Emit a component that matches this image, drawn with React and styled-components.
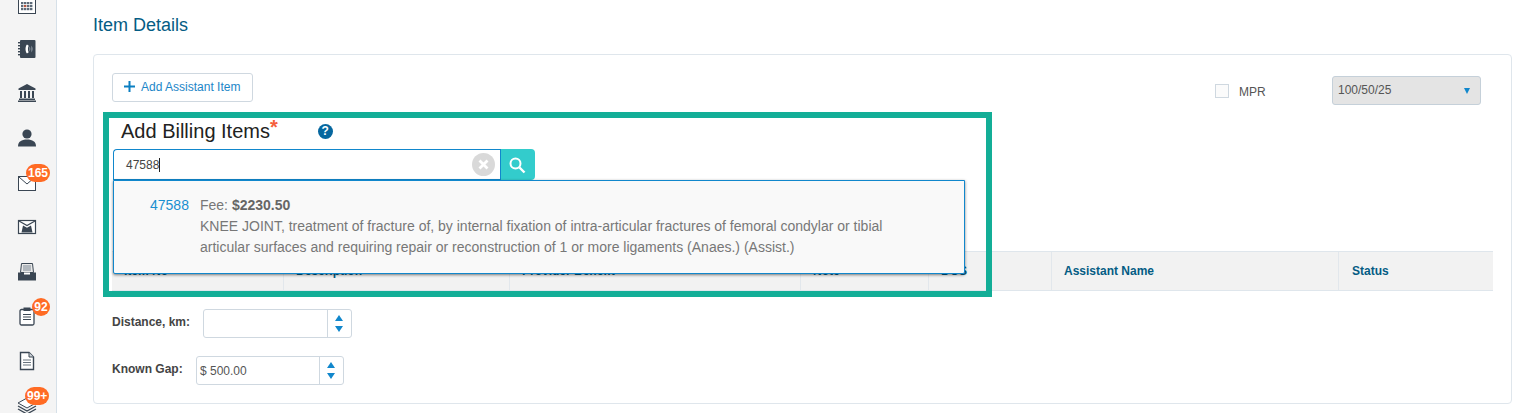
import React from 'react'
import styled, { createGlobalStyle } from 'styled-components'

const Global = createGlobalStyle`
html, body { margin: 0; padding: 0; height: 413px; overflow: hidden; background: #fff; }
body { font-family: "Liberation Sans", Arial, sans-serif; color: #444; }
* { box-sizing: border-box; }
`

const Page = styled.div`
display: flex;
height: 413px;
overflow: hidden;
`

const Sidebar = styled.aside`
width: 57px;
flex: none;
background: #f4f4f4;
border-right: 1px solid #d6e0e8;
overflow: hidden;
`

const NavList = styled.div`
display: flex;
flex-direction: column;
align-items: center;
margin-top: -18px;
`

const NavItem = styled.div`
position: relative;
width: 56px;
height: 44.6px;
display: flex;
align-items: center;
justify-content: center;
padding-right: 2px;
`

const Badge = styled.span`
position: absolute;
top: 4px;
left: ${p => p.$left}px;
min-width: 18px;
height: 18px;
padding: 0 ${p => p.$pad || 0}px;
border-radius: 9px;
background: #ff6b24;
color: #fff;
font-size: 12px;
font-weight: bold;
line-height: 18px;
text-align: center;
`

const Main = styled.main`
flex: 1;
min-width: 0;
padding: 15px 22px 0 36px;
`

const Heading = styled.h2`
margin: 0 0 18px;
height: 21px;
font-size: 18px;
font-weight: normal;
line-height: 21px;
color: #045c84;
`

const Card = styled.section`
position: relative;
height: 350px;
border: 1px solid #dfe6ec;
border-radius: 4px;
padding: 18px 18px 0;
`

const TopRow = styled.div`
display: flex;
align-items: flex-start;
height: 39px;
`

const AddButton = styled.button`
display: flex;
align-items: center;
gap: 6px;
width: 141px;
height: 29px;
padding: 0 0 2px 11px;
background: #fff;
border: 1px solid #cfd8e0;
border-radius: 3px;
color: #1c86c8;
font: 12px "Liberation Sans", Arial, sans-serif;
`

const MprGroup = styled.div`
display: flex;
align-items: center;
height: 29px;
margin: 3px 12px 0 auto;
`

const CheckBox = styled.span`
width: 14px;
height: 14px;
margin-right: 10px;
background: #fbfbfb;
border: 1px solid #cfd8e0;
`

const MprLabel = styled.span`
width: 93px;
padding-top: 2px;
font-size: 12px;
color: #555;
`

const Select = styled.div`
display: flex;
align-items: center;
justify-content: space-between;
width: 149px;
height: 29px;
padding: 0 10px 1px 5px;
background: #e4e4e4;
border: 1px solid #c5d0d9;
border-radius: 3px;
font-size: 12px;
color: #555;
`

const SelectArrow = styled.span`
width: 0;
height: 0;
margin-top: 1px;
border-left: 3.5px solid transparent;
border-right: 3.5px solid transparent;
border-top: 6px solid #1187cc;
`

const BillingBlock = styled.div`
position: relative;
height: 139px;
`

const BillingTitle = styled.div`
display: flex;
align-items: center;
height: 33px;
padding: 5px 0 0 9px;
font-size: 20px;
line-height: 28px;
color: #222;
`

const Required = styled.span`
position: relative;
top: -4px;
color: #f5603c;
font-size: 20px;
font-weight: bold;
line-height: 0;
`

const HelpIcon = styled.span`
display: inline-flex;
align-items: center;
justify-content: center;
width: 15px;
height: 15px;
margin-left: 40px;
border-radius: 50%;
background: #06679f;
color: #fff;
font-size: 12px;
font-weight: bold;
`

const SearchRow = styled.div`
display: flex;
width: 422px;
height: 31px;
margin: 4px 0 0 1px;
`

const SearchField = styled.div`
flex: 1;
display: flex;
align-items: center;
padding: 0 5px 0 12px;
border: 1px solid #1187cc;
border-right: none;
border-radius: 4px 0 0 0;
font-size: 12px;
color: #444;
`

const Caret = styled.span`
width: 1px;
height: 14px;
background: #222;
`

const ClearButton = styled.span`
display: flex;
align-items: center;
justify-content: center;
width: 23px;
height: 23px;
margin-left: auto;
border-radius: 50%;
background: #d9d9d9;
`

const SearchButton = styled.span`
display: flex;
align-items: center;
justify-content: center;
width: 35px;
padding-right: 2px;
background: #33cccc;
border-left: 1px solid #1187cc;
border-radius: 0 4px 4px 0;
`

const Dropdown = styled.div`
position: absolute;
top: 68px;
left: 1px;
z-index: 3;
display: flex;
width: 852px;
height: 94px;
padding: 14px 60px 0 36px;
background: #f9f9f9;
border: 1px solid #1187cc;
border-radius: 0 0 2px 2px;
box-shadow: 0 1px 3px rgba(0, 0, 0, 0.5);
font-size: 14px;
line-height: 21px;
color: #777;
`

const ItemCode = styled.span`
flex: none;
width: 50px;
color: #1a8fd0;
`

const FeeLine = styled.div`
b { color: #666; }
`

const Table = styled.div`
display: grid;
grid-template-columns: 171px 226px 291px 128px 123px 287px 155px;
width: 1381px;
height: 40px;
background: #f2f2f2;
border-top: 1px solid #dfe6ec;
border-bottom: 1px solid #dfe6ec;
`

const HeadCell = styled.div`
display: flex;
align-items: center;
padding-left: ${p => (p.$last ? 13 : 12)}px;
border-left: ${p => (p.$first ? 'none' : '1px solid #e2e7ec')};
font-size: 12px;
font-weight: bold;
color: #045c84;
`

const FieldRow = styled.div`
display: flex;
align-items: center;
height: 29px;
margin-top: ${p => p.$gap}px;
`

const FieldLabel = styled.label`
width: ${p => p.$width}px;
padding-bottom: 4px;
font-size: 12px;
font-weight: bold;
color: #444;
`

const Spinner = styled.div`
display: flex;
width: ${p => p.$width}px;
height: 29px;
background: #fff;
border: 1px solid #cfd8e0;
border-radius: 3px;
`

const SpinnerValue = styled.div`
flex: 1;
padding-left: 3px;
font-size: 12px;
line-height: 28px;
color: #555;
`

const SpinnerArrows = styled.div`
width: 24px;
padding-right: 1px;
display: flex;
flex-direction: column;
align-items: center;
justify-content: center;
gap: 5px;
border-left: 1px solid #cfd8e0;
`

const ArrowUp = styled.span`
width: 0;
height: 0;
border-left: 4px solid transparent;
border-right: 4px solid transparent;
border-bottom: 6px solid #1187cc;
`

const ArrowDown = styled(ArrowUp)`
border-bottom: none;
border-top: 6px solid #1187cc;
`

const Highlight = styled.div`
position: absolute;
top: 57px;
left: 9px;
z-index: 4;
width: 889px;
height: 185px;
border: 6px solid #13ae97;
pointer-events: none;
`

const ink = '#3a4653'

const Icon = ({ children }) => (
  <svg width="20" height="20" viewBox="0 0 20 20">{children}</svg>
)

const icons = {
  calendar: (
    <Icon>
      <rect x="1.5" y="1.5" width="17" height="18" fill="#fff" stroke={ink} />
      <rect x="1.5" y="1.5" width="17" height="4.5" fill={ink} />
      {[4, 7, 10, 13].map(x => [8, 11, 14].map(y => (
        <rect key={`${x}${y}`} x={x} y={y} width="2.4" height="2.2" fill={y === 11 && x === 7 ? '#b5553f' : '#5d6a78'} />
      )))}
    </Icon>
  ),
  phonebook: (
    <Icon>
      <rect x="3" y="1" width="15.500" height="18" rx="1" fill={ink} />
      {[3, 6, 9, 12, 15].map(y => <rect key={y} x="1" y={y} width="3.5" height="1.4" fill={ink} />)}
      <path d="M10 5.500c-2 1.800-2 7.200 0 9l1.700-1.200c-1-1.500-1-5.100 0-6.600z" fill="#fff" />
      <path d="M12.500 7.500c1 1.200 1 3.800 0 5zM14.500 6.500c1.300 2 1.300 5 0 7z" fill="#aab4be" />
    </Icon>
  ),
  bank: (
    <Icon>
      <path d="M10 1 1.5 5.500v1.500h17V5.500z" fill={ink} />
      {[3, 7, 11, 15].map(x => <rect key={x} x={x} y="8" width="2" height="7" fill={ink} />)}
      <rect x="2" y="15.500" width="16" height="1.500" fill={ink} />
      <rect x="1" y="17.500" width="18" height="1.500" fill={ink} />
    </Icon>
  ),
  user: (
    <Icon>
      <circle cx="10" cy="6" r="4.600" fill={ink} />
      <path d="M1 18.500c0-5 3.500-7 9-7s9 2 9 7z" fill={ink} />
    </Icon>
  ),
  mail: (
    <Icon>
      <rect x="1.500" y="3.500" width="17" height="14" fill="#fff" stroke={ink} />
      <path d="M2 4l8 7 8-7" fill="none" stroke={ink} />
    </Icon>
  ),
  mailbag: (
    <Icon>
      <rect x="1.500" y="3.500" width="17" height="13" fill="#fff" stroke={ink} strokeWidth="1.200" />
      <path d="M2 4l8 4.500L18 4" fill="none" stroke={ink} strokeWidth="1.200" />
      <path d="M6 8.500l4 2.200 4-2.200 1.500 7h-11z" fill={ink} />
    </Icon>
  ),
  inbox: (
    <Icon>
      <path d="M4.500 1.500h11l1 9h-13z" fill="#e8e8e8" stroke={ink} />
      <path d="M6 4h8M6 6h8M6 8h8" stroke="#7d8894" />
      <path d="M1 10.500h18v8H1z" fill={ink} />
      <rect x="7" y="10.500" width="6" height="2" fill="#fff" />
    </Icon>
  ),
  clipboard: (
    <Icon>
      <rect x="3" y="3.500" width="14" height="15.500" rx="1.500" fill="#fff" stroke={ink} strokeWidth="1.300" />
      <rect x="6.500" y="1.500" width="7" height="3.500" fill={ink} />
      <path d="M6 8.500h8M6 11h8M6 13.500h8" stroke={ink} strokeWidth="1.200" />
    </Icon>
  ),
  doc: (
    <Icon>
      <path d="M3.500 1.500h8.500l4.500 4.500v12.500h-13z" fill="#fff" stroke={ink} strokeWidth="1.400" />
      <path d="M12 1.500v4.500h4.500" fill="#cfd4da" stroke={ink} />
      <path d="M6 9h8M6 11.500h8M6 14h8" stroke="#69747f" strokeWidth="1.200" />
    </Icon>
  ),
  layers: (
    <Icon>
      <path d="M10 2 19 7l-9 5-9-5z" fill="#fff" stroke={ink} />
      <path d="M1 10l9 5 9-5M1 13l9 5 9-5" fill="none" stroke={ink} strokeWidth="1.300" />
    </Icon>
  ),
}

const navItems = [
  { icon: 'calendar' },
  { icon: 'phonebook' },
  { icon: 'bank' },
  { icon: 'user' },
  { icon: 'mail', badge: '165', left: 26, pad: 2 },
  { icon: 'mailbag' },
  { icon: 'inbox' },
  { icon: 'clipboard', badge: '92', left: 32 },
  { icon: 'doc' },
  { icon: 'layers', badge: '99+', left: 25, pad: 2 },
]

const columns = ['Item No', 'Description', 'Provider Benefit', 'Note', 'DOS', 'Assistant Name', 'Status']

const Arrows = () => (
  <SpinnerArrows>
    <ArrowUp />
    <ArrowDown />
  </SpinnerArrows>
)

const App = () => (
  <Page>
    <Global />
    <Sidebar>
      <NavList>
        {navItems.map(item => (
          <NavItem key={item.icon}>
            {icons[item.icon]}
            {item.badge && <Badge $left={item.left} $pad={item.pad}>{item.badge}</Badge>}
          </NavItem>
        ))}
      </NavList>
    </Sidebar>
    <Main>
      <Heading>Item Details</Heading>
      <Card>
        <TopRow>
          <AddButton>
            <svg width="11" height="11" viewBox="0 0 11 11">
              <path d="M5.500 0v11M0 5.500h11" stroke="#0b7fc1" strokeWidth="2" />
            </svg>
            Add Assistant Item
          </AddButton>
          <MprGroup>
            <CheckBox />
            <MprLabel>MPR</MprLabel>
            <Select>
              100/50/25
              <SelectArrow />
            </Select>
          </MprGroup>
        </TopRow>
        <BillingBlock>
          <BillingTitle>
            Add Billing Items<Required>*</Required>
            <HelpIcon>?</HelpIcon>
          </BillingTitle>
          <SearchRow>
            <SearchField>
              47588<Caret />
              <ClearButton>
                <svg width="11" height="11" viewBox="0 0 11 11">
                  <path d="M1.500 1.500l8 8M9.500 1.500l-8 8" stroke="#fff" strokeWidth="2.800" />
                </svg>
              </ClearButton>
            </SearchField>
            <SearchButton>
              <svg width="18" height="18" viewBox="0 0 18 18">
                <circle cx="7.500" cy="7.500" r="5" fill="none" stroke="#fff" strokeWidth="2" />
                <path d="M11.500 11.500l5 5" stroke="#fff" strokeWidth="2.400" />
              </svg>
            </SearchButton>
          </SearchRow>
          <Dropdown>
            <ItemCode>47588</ItemCode>
            <div>
              <FeeLine>Fee: <b>$2230.50</b></FeeLine>
              KNEE JOINT, treatment of fracture of, by internal fixation of intra-articular fractures of femoral condylar or tibial articular surfaces and requiring repair or reconstruction of 1 or more ligaments (Anaes.) (Assist.)
            </div>
          </Dropdown>
        </BillingBlock>
        <Table>
          {columns.map((c, i) => (
            <HeadCell key={c} $first={i === 0} $last={i === columns.length - 1}>{c}</HeadCell>
          ))}
        </Table>
        <FieldRow $gap={18}>
          <FieldLabel $width={91}>Distance, km:</FieldLabel>
          <Spinner $width={149}><SpinnerValue /><Arrows /></Spinner>
        </FieldRow>
        <FieldRow $gap={18}>
          <FieldLabel $width={84}>Known Gap:</FieldLabel>
          <Spinner $width={148}><SpinnerValue>$ 500.00</SpinnerValue><Arrows /></Spinner>
        </FieldRow>
        <Highlight />
      </Card>
    </Main>
  </Page>
)

export default App
